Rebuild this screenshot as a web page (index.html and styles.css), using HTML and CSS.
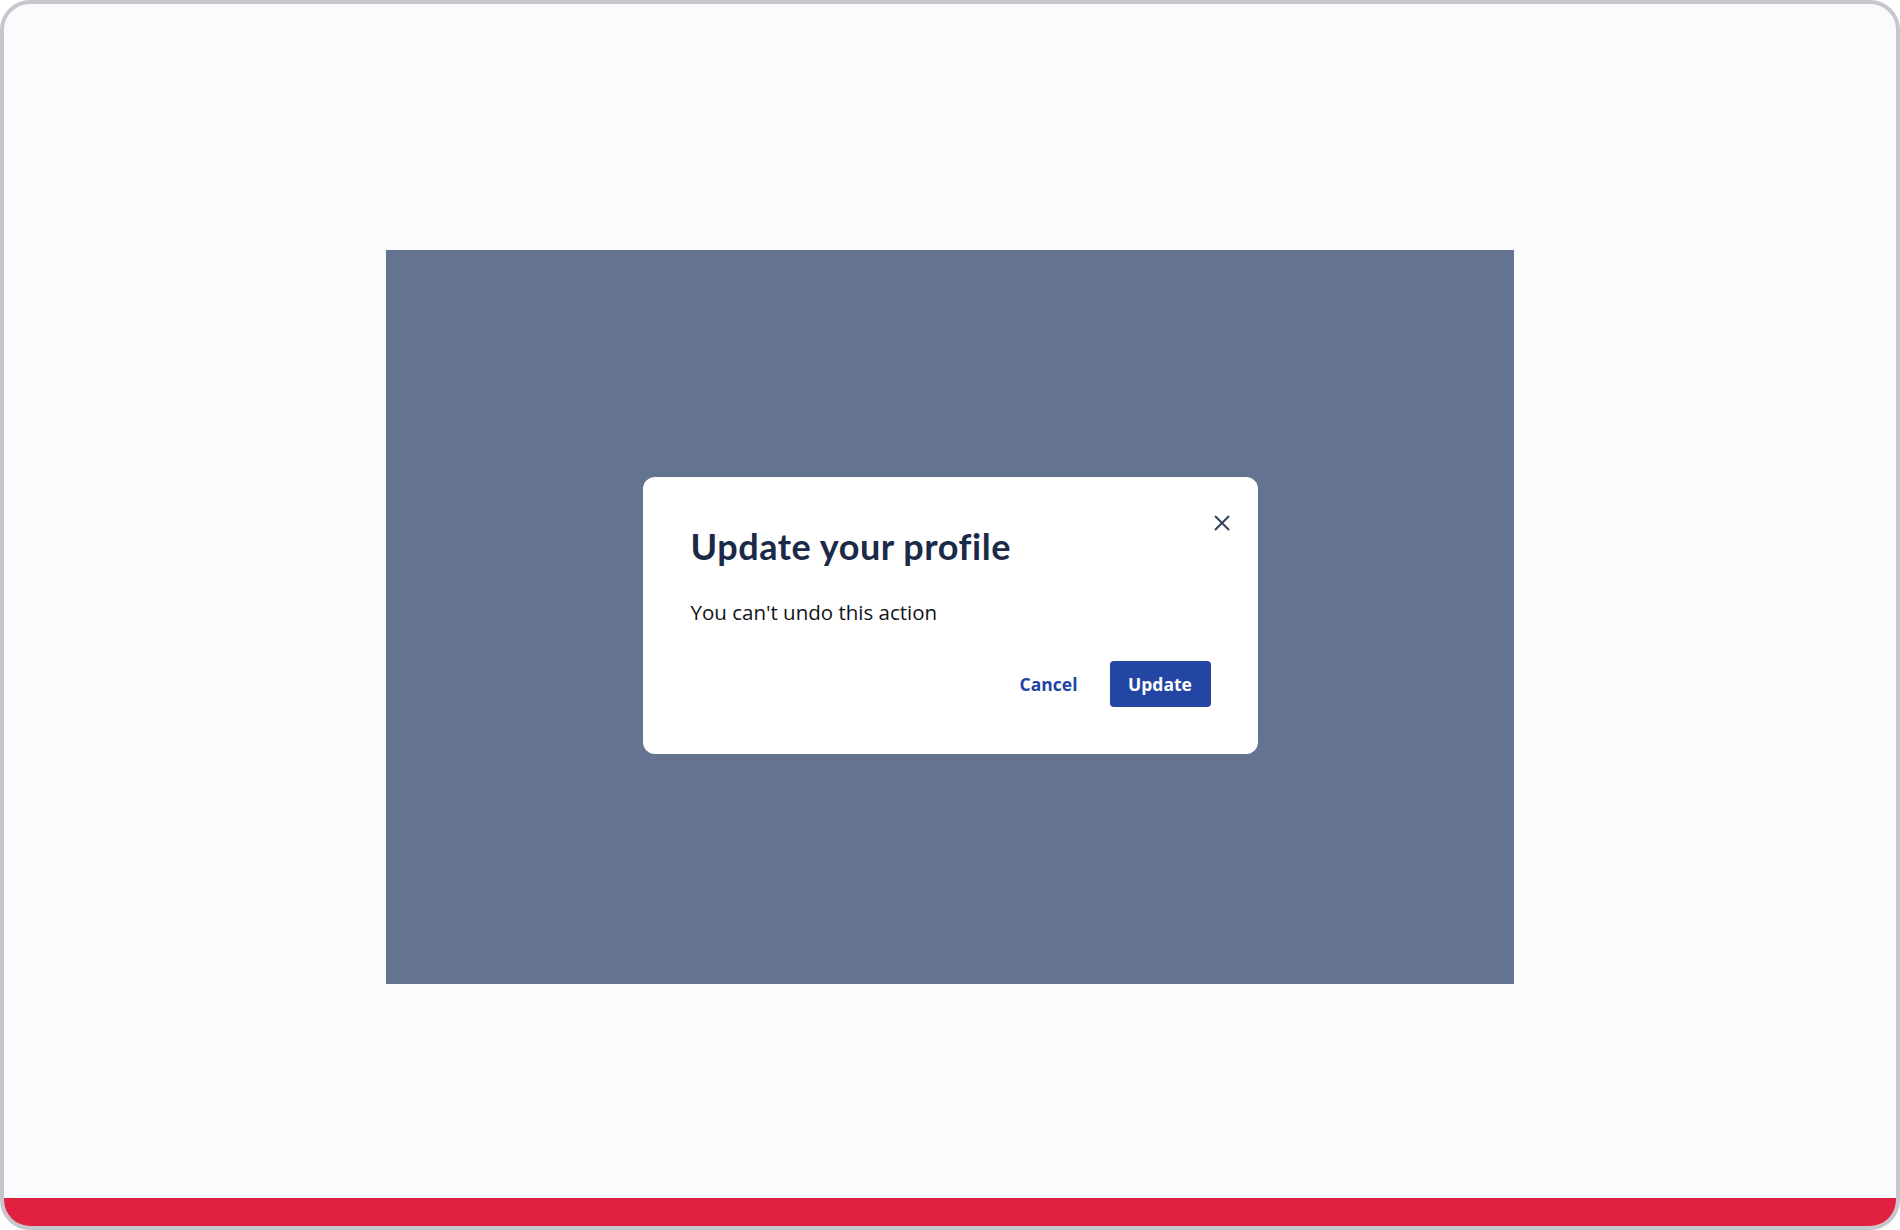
FILE: index.html
```html
<!DOCTYPE html>
<html lang="en">
<head>
<meta charset="utf-8">
<title>Update your profile</title>
<link rel="stylesheet" href="styles.css">
</head>
<body>
<div class="frame">
  <main class="stage">
    <div class="overlay">
      <div class="dialog" role="dialog" aria-labelledby="dlg-title">
        <button class="close" aria-label="Close">
          <svg width="18" height="18" viewBox="0 0 18 18"><path d="M2.5 2.5 L15.5 15.5 M15.5 2.5 L2.5 15.5" stroke="#34435c" stroke-width="2" stroke-linecap="round" fill="none"/></svg>
        </button>
        <h2 class="title" id="dlg-title">Update your profile</h2>
        <p class="body">You can't undo this action</p>
        <div class="actions">
          <button class="btn-link">Cancel</button>
          <button class="btn-primary">Update</button>
        </div>
      </div>
    </div>
  </main>
  <div class="footer-bar"></div>
</div>
</body>
</html>
```

FILE: styles.css
```css
html, body {
  margin: 0;
  padding: 0;
  background: #ffffff;
}

.frame {
  box-sizing: border-box;
  width: 1900px;
  height: 1230px;
  border: 4px solid #c6c7cc;
  border-radius: 30px;
  overflow: hidden;
  background: #fafbfd;
  display: flex;
  flex-direction: column;
}

.stage {
  flex: 1;
  padding-top: 246px;
  display: flex;
  justify-content: center;
  align-items: flex-start;
}

.overlay {
  box-sizing: border-box;
  width: 1128px;
  height: 734px;
  padding-bottom: 3px;
  background: #64738f;
  display: flex;
  align-items: center;
  justify-content: center;
}

.dialog {
  position: relative;
  box-sizing: border-box;
  width: 615px;
  height: 277px;
  background: #ffffff;
  border-radius: 12px;
  padding: 48px 47px 47px 48px;
  display: flex;
  flex-direction: column;
}

.close {
  position: absolute;
  top: 36px;
  right: 26px;
  width: 20px;
  height: 20px;
  padding: 0;
  border: 0;
  background: transparent;
  display: flex;
  align-items: center;
  justify-content: center;
  cursor: pointer;
}

.title {
  margin: 0;
  font-family: Lato, "Liberation Sans", sans-serif;
  font-weight: 700;
  font-size: 36px;
  line-height: 42px;
  letter-spacing: 0.55px;
  color: #1b2a47;
}

.body {
  margin: 31px 0 0 0;
  font-family: "Open Sans", "Noto Sans", sans-serif;
  font-size: 20.5px;
  line-height: 28px;
  color: #111318;
}

.actions {
  margin-top: auto;
  display: flex;
  justify-content: flex-end;
  align-items: center;
  gap: 32px;
}

.btn-link {
  border: 0;
  background: transparent;
  padding: 0;
  font-family: "Open Sans", "Noto Sans", sans-serif;
  font-weight: 700;
  font-size: 17.5px;
  color: #2344a2;
  cursor: pointer;
}

.btn-primary {
  box-sizing: border-box;
  width: 101px;
  height: 46px;
  border: 0;
  border-radius: 4px;
  background: #2345a3;
  color: #ffffff;
  font-family: "Open Sans", "Noto Sans", sans-serif;
  font-weight: 700;
  font-size: 17.5px;
  cursor: pointer;
}

.footer-bar {
  height: 28px;
  background: #e02141;
  flex: none;
}
```
